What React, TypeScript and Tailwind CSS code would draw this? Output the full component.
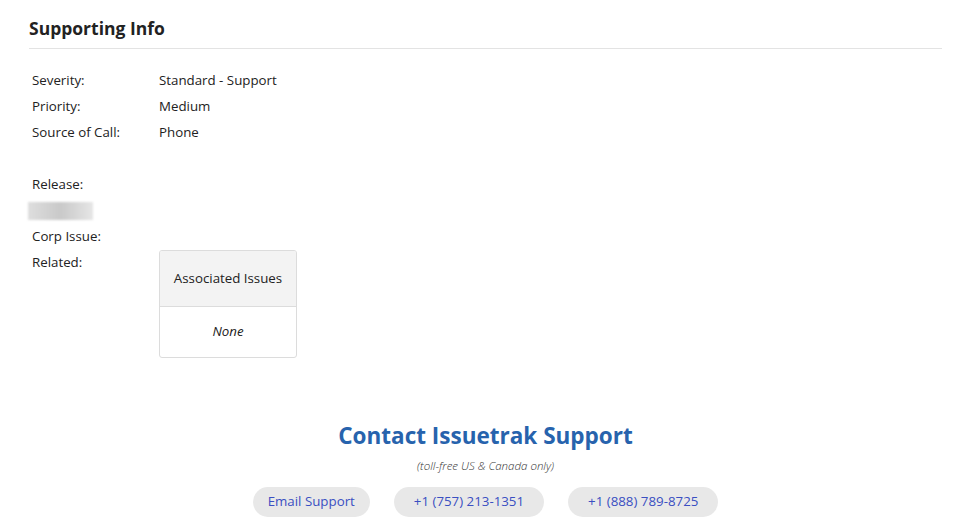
const rows = [
  { label: 'Severity:', value: 'Standard - Support' },
  { label: 'Priority:', value: 'Medium' },
  { label: 'Source of Call:', value: 'Phone' },
];

const links = [
  { text: 'Email Support', pad: 'px-[15px]' },
  { text: '+1 (757) 213-1351', pad: 'px-[20px]' },
  { text: '+1 (888) 789-8725', pad: 'px-[20px]' },
];

export default function App() {
  return (
    <div className="min-h-screen bg-white text-[13.3px] text-[#222] font-['Open_Sans',sans-serif]">
      <div className="px-[29px] pt-[15px]">
        <h2 className="text-[17.5px] font-bold leading-[26px] pb-[7px] border-b border-[#e3e3e3]">Supporting Info</h2>

        <div className="pl-[3px] pt-[19px]">
          {rows.map((r) => (
            <div key={r.label} className="flex h-[26px] items-center">
              <div className="w-[127px] font-medium">{r.label}</div>
              <div>{r.value}</div>
            </div>
          ))}

          <div className="h-[26px]" />
          <div className="flex h-[26px] items-center font-medium">Release:</div>
          <div className="h-[26px] flex items-center -ml-[4px]">
            <div className="w-[65px] h-[18px] bg-gradient-to-r from-[#dedede] via-[#c9c9c9] to-[#e6e6e6] blur-[1px]" />
          </div>
          <div className="flex h-[26px] items-center font-medium">Corp Issue:</div>
          <div className="flex">
            <div className="w-[127px] h-[26px] flex items-center font-medium">Related:</div>
            <div className="w-[138px] border border-[#dcdcdc] rounded-[3px] overflow-hidden">
              <div className="h-[56px] bg-[#f3f3f3] border-b border-[#dcdcdc] flex items-center justify-center">Associated Issues</div>
              <div className="h-[50px] flex items-center justify-center italic">None</div>
            </div>
          </div>
        </div>
      </div>

      <div className="flex flex-col items-center pt-[63px]">
        <h3 className="text-[22.5px] font-bold text-[#2763ad] leading-[30px]">Contact Issuetrak Support</h3>
        <div className="text-[11.5px] italic mt-[7px] leading-[16px] font-light text-[#333]">(toll-free US &amp; Canada only)</div>
        <div className="flex gap-[24px] mt-[13px]">
          {links.map((l) => (
            <a key={l.text} className={`rounded-full bg-[#e8e8e8] text-[#3a4fc2] ${l.pad} h-[30px] flex items-center`}>
              {l.text}
            </a>
          ))}
        </div>
      </div>
    </div>
  );
}
